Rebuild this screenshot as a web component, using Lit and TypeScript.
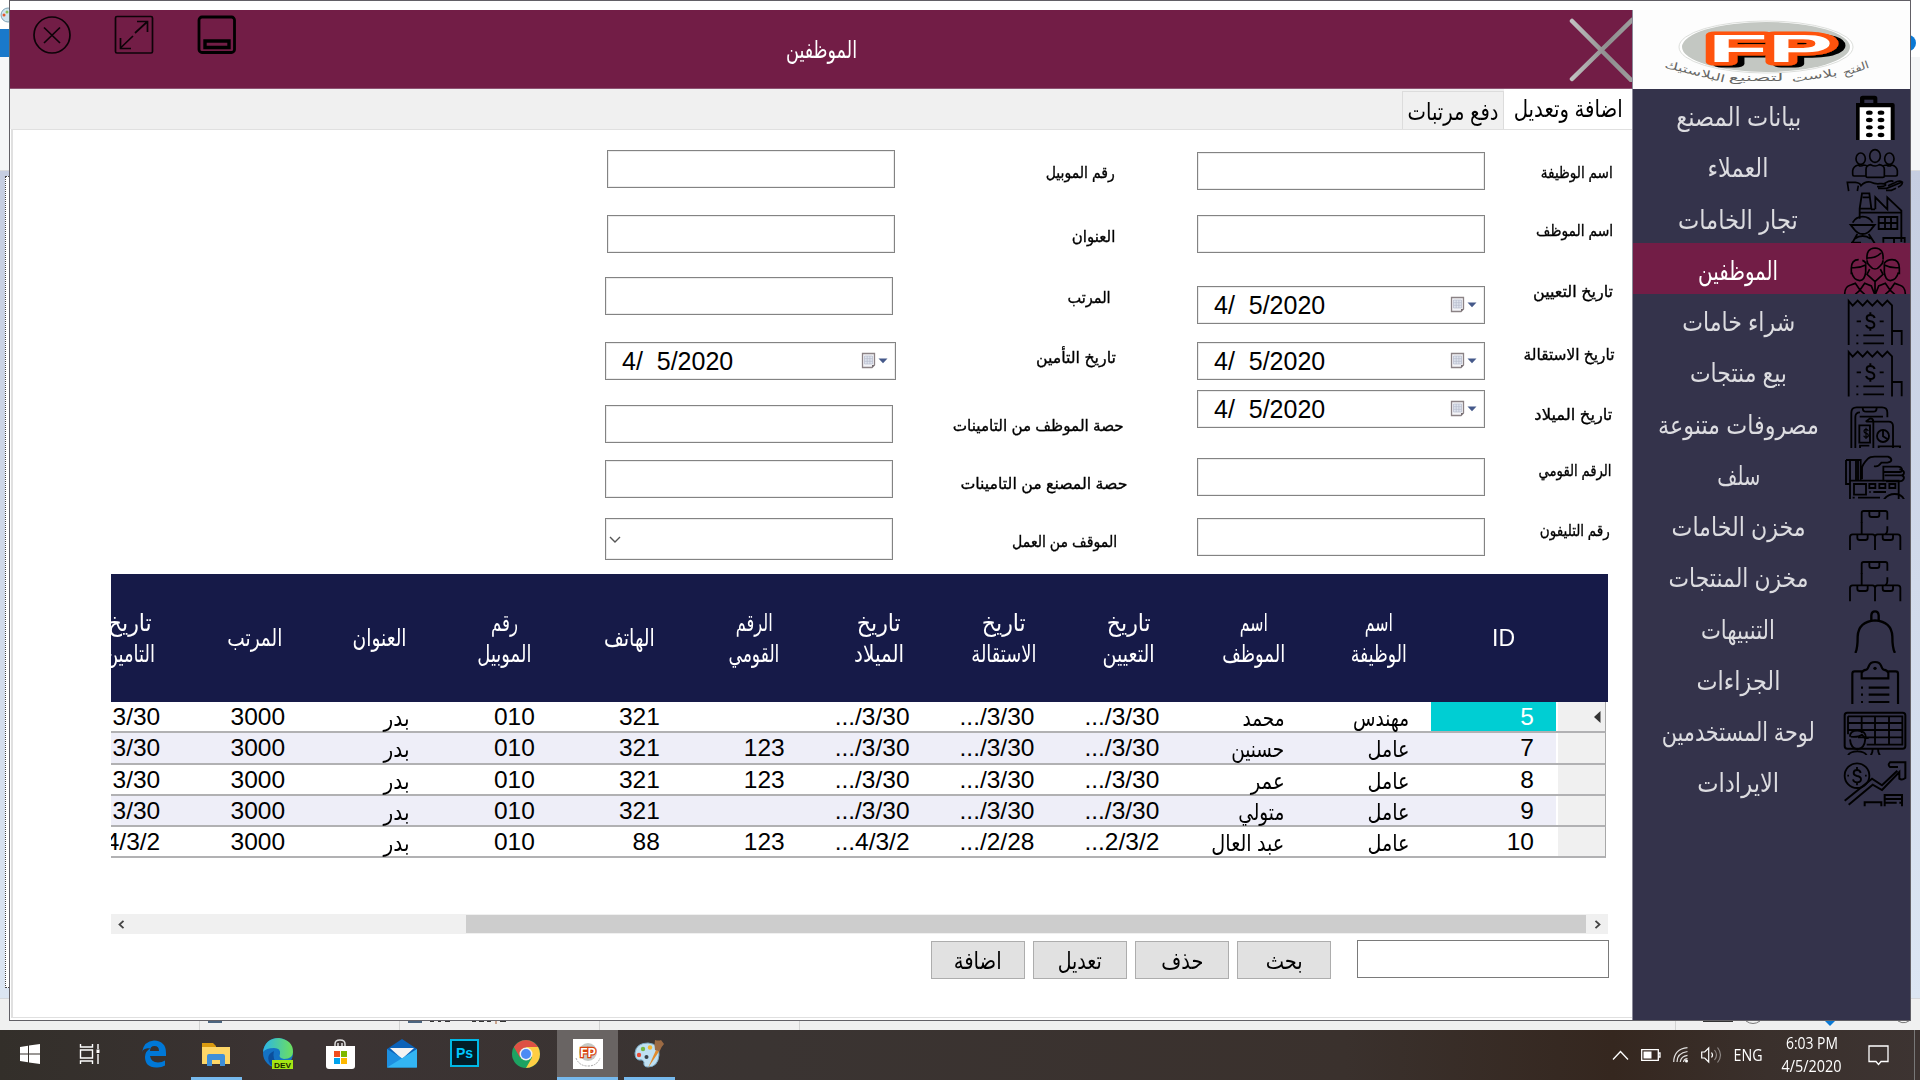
import { LitElement, html, svg, css, nothing } from "lit";
import { customElement, property } from "lit/decorators.js";
import { classMap } from "lit/directives/class-map.js";
import { styleMap } from "lit/directives/style-map.js";

/** Text squeezed or stretched horizontally to a given advance width. */
@customElement("fit-text")
class FitText extends LitElement {
  @property({ type: Number }) w = 0;
  @property() text = "";
  static styles = css`
    :host { display: block; direction: rtl; white-space: pre; flex: none; }
    .t { display: inline-block; transform-origin: 100% 50%; }
    .ltr { direction: ltr; }
  `;
  updated() {
    const t = this.renderRoot.querySelector(".t") as HTMLElement;
    this.style.width = this.w + "px";
    t.style.transform = "";
    const n = t.getBoundingClientRect().width;
    if (n > 0) t.style.transform = `scaleX(${this.w / n})`;
  }
  render() {
    return html`<span class=${classMap({ t: true, ltr: /^[\x20-\x7e]+$/.test(this.text) })}>${this.text}</span>`;
  }
}

interface Label { text: string; w: number; gap: number; inset: number; }
interface Control { gap: number; kind: "text" | "date" | "combo"; shift?: number; wide?: boolean; }

const RIGHT_LABELS: Label[] = [
  { text: "اسم الوظيفة", w: 72, gap: 31, inset: 3 },
  { text: "اسم الموظف", w: 77, gap: 34, inset: 3 },
  { text: "تاريخ التعيين", w: 80, gap: 37, inset: 3.5 },
  { text: "تاريخ الاستقالة", w: 91, gap: 38.5, inset: 1 },
  { text: "تاريخ الميلاد", w: 78, gap: 36.5, inset: 4 },
  { text: "الرقم القومي", w: 73, gap: 32.2, inset: 4.5 },
  { text: "رقم التليفون", w: 70, gap: 35.8, inset: 6 },
];
const LEFT_LABELS: Label[] = [
  { text: "رقم الموبيل", w: 69, gap: 31, inset: 13 },
  { text: "العنوان", w: 43.5, gap: 40, inset: 12.5 },
  { text: "المرتب", w: 43, gap: 37, inset: 17.5 },
  { text: "تاريخ التأمين", w: 80, gap: 36, inset: 12 },
  { text: "حصة الموظف من التامينات", w: 171, gap: 43.7, inset: 4 },
  { text: "حصة المصنع من التامينات", w: 167, gap: 34.8, inset: 1 },
  { text: "الموقف من العمل", w: 105, gap: 34, inset: 11 },
];
const RIGHT_CONTROLS: Control[] = [
  { kind: "text", gap: 22 }, { kind: "text", gap: 25 }, { kind: "date", gap: 33 },
  { kind: "date", gap: 18 }, { kind: "date", gap: 10 }, { kind: "text", gap: 30 },
  { kind: "text", gap: 22 },
];
const LEFT_CONTROLS: Control[] = [
  { kind: "text", gap: 20, shift: 2 }, { kind: "text", gap: 27, shift: 2 }, { kind: "text", gap: 24 },
  { kind: "date", gap: 27, wide: true }, { kind: "text", gap: 25 }, { kind: "text", gap: 17 },
  { kind: "combo", gap: 20 },
];

const HEADERS: [string, number][][] = [
  [["ID", 23]],
  [["اسم", 28], ["الوظيفة", 56]],
  [["اسم", 28], ["الموظف", 63]],
  [["تاريخ", 44], ["التعيين", 52]],
  [["تاريخ", 44], ["الاستقالة", 65]],
  [["تاريخ", 44], ["الميلاد", 50]],
  [["الرقم", 37], ["القومي", 51]],
  [["الهاتف", 51]],
  [["رقم", 27], ["الموبيل", 54]],
  [["العنوان", 54]],
  [["المرتب", 55]],
  [["تاريخ", 44], ["التامين", 50]],
];
const NAME_W: Record<string, number> = {
  "مهندس": 56, "عامل": 42, "محمد": 42, "حسنين": 53, "عمر": 34, "متولي": 46, "عبد العال": 73, "بدر": 26,
};
const ROWS: string[][] = [
  ["5", "مهندس", "محمد", ".../3/30", ".../3/30", ".../3/30", "", "321", "010", "بدر", "3000", "3/30"],
  ["7", "عامل", "حسنين", ".../3/30", ".../3/30", ".../3/30", "123", "321", "010", "بدر", "3000", "3/30"],
  ["8", "عامل", "عمر", ".../3/30", ".../3/30", ".../3/30", "123", "321", "010", "بدر", "3000", "3/30"],
  ["9", "عامل", "متولي", ".../3/30", ".../3/30", ".../3/30", "", "321", "010", "بدر", "3000", "3/30"],
  ["10", "عامل", "عبد العال", "...2/3/2", ".../2/28", "...4/3/2", "123", "88", "010", "بدر", "3000", "4/3/2"],
];

const receipt = svg`
  <path d="M686 153.7V20l12 14 15-15 15 15 14-15 15 15 15-15 15 15 15-15 14 14V153.7M817 110h28v43" transform="translate(0 1)"/>
  <path d="M710 82h13M779 82h12M730 124h62M730 148h62M709 124h6M709 148h6"/>
  <path d="M764 72q-3-9-13-9-11 0-11 9 0 8 11 10 12 2 12 11 0 9-12 9-10 0-13-9M751 55v8M751 102v8" stroke-width="6"/>`;
const boxes = svg`
  <path d="M725 72V42q0-6 6-6h65q6 0 6 6v20M802 82v12q0 8-6 12M748 37v10q0 7 7 7h16q7 0 7-7V37"/>
  <path d="M725 70v35M690 154v-40q0-8 8-8h59q8 0 8 8v40M765 154v-40q0-8 8-8h60q8 0 8 8v40M712 107v9q0 7 7 7h17q7 0 7-7v-9M788 107v9q0 7 7 7h17q7 0 7-7v-9"/>`;

/** Menu glyphs, each drawn on a 200 x 154 canvas whose x origin is 666. */
const ICONS = [
  svg`<g stroke="none" fill="#000"><path d="M708 42h12V28q0-8 8-8h36q8 0 8 8v14h46q6 0 6 6v106H708z"/>
    <path d="M733 32h27v10h-27z" fill="#34334b"/><path d="M719 55h93v99h-93z" fill="#fff"/>
    ${[71, 93, 115, 138].map((y) => svg`<ellipse cx="748" cy=${y} rx="10" ry="6.5"/><ellipse cx="783" cy=${y} rx="10" ry="6.5"/>`)}</g>`,
  svg`<g stroke-width="5"><ellipse cx="722" cy="56" rx="14" ry="17"/><ellipse cx="765" cy="48" rx="16" ry="19"/><ellipse cx="808" cy="56" rx="14" ry="17"/>
    <path d="M737 108h-35q-4 0-4-5V92q2-14 17-17 7 6 16 0 8 0 12 5M793 108h34q5 0 5-5V92q-2-14-17-17-7 6-15 0-8 0-13 5M738 108q0 4 5 4h45q5 0 5-4V88q0-12-15-14-12 8-26 0-14 2-14 14z"/>
    <path d="M686 153l-4-26h24q14 1 17 10 12-14 28-11 16 7 28 5 18-1 18 4-2 4-26 5M712 153l3-16M774 145h26l46-19q-8-6-22 2l-20 9M792 131l14-7q10-3 14 1M828 145l-14 6h-16M846 127q4 6-12 15"/></g>`,
  svg`<path d="M719 62V50l7-46h22l6 46M719 50h35M728 16h20M766 52V16l36 36V16l42 40v94M719 62h124M719 54v26M765 52h-12M776 75h56v36h-56zM795 75v36M813 75v36M776 93h56"/>
    <path d="M692 99h72l-9 11q-12 16-27 16t-27-16zM698 92q10-18 30-18t30 18M712 126l-16 28M746 126l18 28M704 140q24-16 48 0M693 152h30M790 152v-14h64v14M822 138v16"/>`,
  svg`<g stroke-width="5"><path d="M741 50q-3-34 24-35 27 1 24 35M741 52q0 10 8 16 16 20 32 0 8-6 8-16M743 45q25 0 40-15"/>
    <path d="M716 50q-22 0-22 26v18M739 62q-6-9-12-10M694 74q24 2 43-8v22q-3 24-18 25-19-3-24-25M816 50q22 0 22 26v18M792 62q8-12 24-12M836 74q-24 2-43-8v22q3 24 18 25 19-3 24-25"/>
    <path d="M674 154q0-24 18-28l14-5 14 20 14-20 20 8 10 25M856 154q0-24-18-28l-14-5-14 20-14-20-20 8-10 25M749 78l-8 16 24 22 24-22-8-16M765 116v38M720 141l-14 13M720 141l14 13M810 141l-14 13M810 141l14 13"/></g>`,
  receipt,
  receipt,
  svg`<path d="M694 154V47q0-16 16-16h76q16 0 16 16v14M706 154V60q0-14 14-14M728 32q0 12 10 12h22q10 0 10-12M719 59h70"/>
    <path d="M718 85h32v52h-32zM760 154V74q0-10-10-10l-13 10M740 74h66q13 0 13 14v66M776 154v-6h64v6M720 154v-8h28"/>
    <circle cx="789" cy="117" r="18"/><path d="M789 99v19l14 9"/><path d="M745 102q-2-5-7-5-6 0-6 6 0 5 6 6 7 1 7 6 0 6-7 6-5 0-7-5M738 92v34" stroke-width="3.5"/>`,
  svg`<path d="M726 94V62q0-12 18-30 6-6 20-6h40q10 4 10 10t-12 8h-18q-10 14-22 10M790 100V56h44q10 0 12 8t-8 8h-46M838 64q14 2 14 10t-12 8h-46M846 82q8 4 5 11t-13 7h-40M678 36h44v62M678 36v72h12M690 36v62M708 36v62M714 36v62"/>
    <path d="M690 154V98h146v56M702 108h36v32h-36zM748 108h18v12h-18zM778 108h18v12h-18zM808 108h18v12h-18zM748 132h4M760 132h38M698 149h6M714 149h66M792 154q12-16 32-16t28 16"/>`,
  boxes,
  boxes,
  svg`<g stroke-width="7"><path d="M706 153q7-12 7-50 2-44 52-48 50 4 52 48 0 38 8 50"/><path d="M754 55V40q1-12 11-12t11 12v15"/></g>`,
  svg`<g stroke-width="6.5"><path d="M697 154V62q0-7 7-7h22M834 154V62q0-7-7-7h-22M725 76V60q2-8 14-10 4-1 8-12 4-11 18-11t18 11q4 11 8 12 12 2 14 10v16z"/>
    <path d="M746 104h62M746 125h62M746 147h62M723 104h6M723 125h6M723 147h6"/></g><circle cx="765" cy="46" r="5" fill="#000" stroke="none"/>`,
  svg`<rect x="674" y="26" width="182" height="108" rx="8" stroke-width="6"/><path d="M684 37h163v85H740M684 37v54M684 57h163M684 78h163M714 100h133M725 37v50M765 37v85M807 37v85"/>
    <path d="M690 98q0-18 22-18 26 0 26 22h8M692 98q24 2 34-6l10 12q-2 30-24 32-20-4-22-30M684 154q6-12 28-12t28 12M758 134q0 14-6 20M774 134q0 14 6 20"/>`,
  svg`<circle cx="711" cy="62" r="37"/><path d="M722 54q-2-9-11-9-10 0-10 9 0 7 10 9 12 2 12 10 0 9-12 9-10 0-12-9M711 36v9M711 82v9M682 62h5M735 62h5" stroke-width="5.500"/>
    <path d="M674 137l82-66 30 20 46-44M686 149l72-60 28 16 52-54v20q8 6 18-2V22h-46q-8 8 0 14h24M734 154v-12h50v12M794 154v-34h52v34M794 132h52M794 143h36M838 143h8" stroke-width="6"/>`,
];

const MENU: { text: string; w: number }[] = [
  { text: "بيانات المصنع", w: 125 },
  { text: "العملاء", w: 61 },
  { text: "تجار الخامات", w: 120 },
  { text: "الموظفين", w: 80 },
  { text: "شراء خامات", w: 113 },
  { text: "بيع منتجات", w: 97 },
  { text: "مصروفات متنوعة", w: 161 },
  { text: "سلف", w: 43 },
  { text: "مخزن الخامات", w: 134 },
  { text: "مخزن المنتجات", w: 140 },
  { text: "التنبيهات", w: 74 },
  { text: "الجزاءات", w: 84 },
  { text: "لوحة المستخدمين", w: 153 },
  { text: "الايرادات", w: 82 },
];

const px = (n: number) => `${n}px`;

@customElement("app-root")
class AppRoot extends LitElement {
  static styles = css`
    :host { display: block; width: 1920px; height: 1080px; overflow: hidden; font-family: "Liberation Sans", "DejaVu Sans", sans-serif; color: #000; }
    * { box-sizing: border-box; }
    svg { display: block; flex: none; }
    .screen { display: flex; flex-direction: column; width: 1920px; height: 1080px; background: #f0f0f0; }
    .desk { display: flex; height: 1021px; }
    .gutter { width: 9px; display: flex; flex-direction: column; overflow: hidden; }
    .g-top { height: 29px; background: #fff; }
    .g-tab { height: 28px; background: #1979ca; }
    .g-tab.plain { background: #fff; }
    .g-ribbon { height: 114px; background: #f5f6f7; border-bottom: 1px solid #dadbdc; }
    .g-canvas { height: 827px; background: linear-gradient(#c6cee1, #dce6f3); padding: 5px 0 0 5px; }
    .g-page { height: 812px; background: #fff; border: 1px dotted #444; border-right: 0; }
    .g-status { flex: 1; border-top: 1px solid #d5d8dc; }
    .window { width: 1902px; display: flex; border: 1px solid #626066; background: #fff; padding-top: 9px; }
    .main { width: 1622px; display: flex; flex-direction: column; }
    .title { height: 79px; background: #721d46; border-bottom: 1px solid #8d5473; display: flex; align-items: flex-start; }
    .win-btns { display: flex; gap: 42.500px; padding: 5px 0 0 21.500px; width: 776px; }
    .title fit-text { color: #fff; font-size: 24px; line-height: 40px; margin-top: 20px; }
    .title .cross { margin: 6px 0 0 auto; }
    .tabs { height: 40px; background: #f0f0f0; display: flex; justify-content: flex-end; align-items: flex-end; }
    .tab { height: 38px; border: 1px solid #dcdcdc; border-bottom: 0; width: 102px; font-size: 24px; line-height: 34px; padding: 3px 4px 0 0; display: flex; justify-content: flex-end; }
    .tab.active { height: 41px; width: 128px; background: #fff; border: 0; margin-bottom: -1px; padding: 3px 9px 0 0; }
    .panel { flex: 1; margin: 0 0 2px 1px; border: solid #e0e0e0; border-width: 1px 0 1px 2px; background: #fff; display: flex; flex-direction: column; }
    .form { height: 444px; display: flex; padding-left: 592px; }
    .labels, .controls { display: flex; flex-direction: column; }
    .labels { align-items: flex-end; font-size: 16px; line-height: 24px; -webkit-text-stroke: .35px #000; }
    .labels.l { width: 232px; }
    .labels.r { width: 131px; }
    .controls.l { width: 291px; }
    .controls.r { width: 288px; margin-left: 69px; }
    .ctl { height: 38px; width: 288px; border: 1px solid #838383; box-shadow: inset 0 0 0 1px #ececec; background: #fff; display: flex; align-items: center; flex: none; }
    .ctl.wide { width: 291px; }
    .ctl.combo { height: 42px; padding: 2px 0 0 3px; }
    .ctl.date { font-size: 25px; padding: 0 7px 0 16px; justify-content: space-between; white-space: pre; }
    .grid { margin-left: 98px; width: 1497px; height: 340px; display: flex; flex-direction: column; overflow: hidden; direction: rtl; }
    .head { height: 128px; background: #161a48; display: flex; padding-right: 42px; color: #fff; font-size: 24px; line-height: 31.500px; flex: none; }
    .th { width: 124.900px; display: flex; flex-direction: column; align-items: center; justify-content: center; flex: none; }
    .row { height: 31.250px; display: flex; border-bottom: 2px solid #b1b1b3; font-size: 24.500px; line-height: 30.500px; flex: none; margin-right: 2px; border-right: 1px solid #a8a8a8; }
    .row:nth-child(odd) { background: #eeeef8; }
    .rh { width: 49px; background: #f0f0f0; border-left: 2px solid #fff; flex: none; padding: 9px 4px 0 0; }
    .td { width: 124.900px; padding-right: 22px; flex: none; white-space: nowrap; }
    .td bdo { direction: ltr; unicode-bidi: bidi-override; }
    .td.sel { background: #00ced3; color: #fff; }
    .td fit-text { font-size: 23px; padding-top: 1px; }
    .hscroll { margin-left: 98px; width: 1497px; height: 20px; background: #f0f0f0; display: flex; align-items: center; justify-content: space-between; padding: 0 7px; }
    .thumb { width: 1120px; height: 18px; background: #cdcdcd; margin-left: auto; margin-right: 8px; }
    .actions { display: flex; margin: 6px 23px 0 0; justify-content: flex-end; gap: 8px; }
    .btn { width: 94px; height: 38px; margin-top: 1px; background: #e1e1e1; border: 1px solid #adadad; display: flex; justify-content: center; font-size: 24px; line-height: 38px; }
    .search { width: 252px; height: 38px; border: 1px solid #7a7a7a; margin-left: 18px; }
    .side { width: 278px; background: #34334b; display: flex; flex-direction: column; border-left: 1px solid #8b8a99; }
    .logo { height: 79px; background: #fdfdfd; flex: none; }
    .item { height: 51.250px; display: flex; align-items: center; justify-content: flex-end; color: #dcdce0; font-size: 26px; line-height: 44px; flex: none; }
    .item.active { background: #721d46; color: #fff; }
    .item .cap { width: 208px; display: flex; justify-content: center; padding-top: 5px; }
    .item svg { fill: none; stroke: #000; stroke-width: 5.500; margin-right: 1px; }
    .strip { height: 9px; background: #f0f0f0; display: flex; overflow: hidden; }
    .bar { height: 50px; display: flex; background: linear-gradient(90deg, #332f2a, #3b3333 15%, #3a3432 40%, #3a312d 70%, #35271f 84%, #3a302c 92%, #3d3432); color: #fff; font-family: "Open Sans", "Noto Sans", sans-serif; }
    .app { width: 62px; display: flex; align-items: center; justify-content: center; border-bottom: 3px solid transparent; flex: none; }
    .app.first { width: 60px; }
    .app.views { width: 63px; padding-right: 3px; }
    .app.open { width: 51px; border-color: #76b9ed; margin: 0 5.500px; }
    .app.cur { background: #696463; border-color: #76b9ed; }
    .apps { display: flex; width: 1612px; }
    .apps .cur { width: 61px; }
    .tray { display: flex; align-items: center; flex: 1; font-size: 15.500px; }
    .tray svg { margin-right: 12px; }
    .clock { display: flex; flex-direction: column; align-items: center; width: 62px; margin: 0 25px 0 17.500px; line-height: 23px; }
    .peek { margin-left: auto; width: 6px; height: 50px; border-left: 1px solid #777; }
  `;

  private gutter(left: boolean) {
    return html`<div class="gutter">
      <div class="g-top">${left ? html`<svg width="9" height="29" viewBox="0 0 9 29"><circle cx="8" cy="15" r="7" fill="#cfe3ee" stroke="#7fa3b5"/><circle cx="4" cy="15" r="1.500" fill="#e4572e"/><circle cx="7" cy="12" r="1.500" fill="#8cc152"/></svg>` : nothing}</div>
      <div class=${classMap({ "g-tab": true, plain: !left })}>${left ? nothing : html`<svg width="9" height="28"><circle cx="-3" cy="14" r="8" fill="#0a78d4"/></svg>`}</div>
      <div class="g-ribbon"></div>
      <div class="g-canvas">${left ? html`<div class="g-page"></div>` : nothing}</div>
      <div class="g-status"></div>
    </div>`;
  }

  private labels(list: Label[], side: string) {
    return html`<div class="labels ${side}">${list.map((l) => html`<fit-text .w=${l.w} .text=${l.text}
      style=${styleMap({ marginTop: px(l.gap), marginRight: px(l.inset) })}></fit-text>`)}</div>`;
  }

  private controls(list: Control[], side: string) {
    return html`<div class="controls ${side}">${list.map((c) => html`<div
      class=${classMap({ ctl: true, date: c.kind === "date", combo: c.kind === "combo", wide: !!c.wide })}
      style=${styleMap({ marginTop: px(c.gap), marginLeft: px(c.shift ?? 0) })}>
      ${c.kind === "date" ? html`<span>4/  5/2020</span>
        <svg width="27" height="18" viewBox="0 0 27 18"><path d="M1.500 1.500h12v11.500l-2.500 2.500H1.500z" fill="#f4f4f8" stroke="#8b8285" stroke-width="1.300"/><path d="M3.500 4h8v8h-8zM6.200 4v8M8.900 4v8M3.500 6.700h8M3.500 9.300h8" fill="#dfe4ee" stroke="#b6bccb" stroke-width=".7"/><path d="M11 15.500v-2.500h2.500z" fill="#736c70"/><path d="M17.500 6.500h9l-4.500 4.800z" fill="#45598a"/></svg>` : nothing}
      ${c.kind === "combo" ? html`<svg width="12" height="8" viewBox="0 0 12 8"><path d="M1 1l5 5 5-5" fill="none" stroke="#555" stroke-width="1.400"/></svg>` : nothing}
    </div>`)}</div>`;
  }

  private cell(v: string, i: number, r: number) {
    return html`<div class=${classMap({ td: true, sel: i === 0 && r === 0 })}>${NAME_W[v]
      ? html`<fit-text .w=${NAME_W[v]} .text=${v}></fit-text>` : html`<bdo dir="ltr">${v}</bdo>`}</div>`;
  }

  private logo() {
    return html`<svg class="logo" width="277" height="79" viewBox="1633 10 277 79">
      <defs><filter id="sh" x="-20%" y="-20%" width="150%" height="150%"><feDropShadow dx="7" dy="2" stdDeviation="0" flood-color="#000"/></filter></defs>
      <ellipse cx="1766" cy="47" rx="87" ry="26" fill="#fff" stroke="#d3d5d2" stroke-width=".8"/>
      <ellipse cx="1766" cy="47" rx="84" ry="25" fill="#c3c7c2"/>
      <g font-family="Liberation Sans" font-weight="700" font-size="39" stroke-linejoin="round" filter="url(#sh)">
        <text x="1708" y="61.500" textLength="125" lengthAdjust="spacingAndGlyphs" fill="#fff" stroke="#ff5308" stroke-width="7" paint-order="stroke">FP</text>
      </g>
      <g font-family="DejaVu Sans" font-size="10.500" fill="#666664" direction="rtl" text-anchor="middle">
        <text transform="translate(1857 72) rotate(-19)" textLength="27" lengthAdjust="spacingAndGlyphs">الفتح</text>
        <text transform="translate(1815 79) rotate(-8)" textLength="46" lengthAdjust="spacingAndGlyphs">بلاست</text>
        <text transform="translate(1756 81)" textLength="55" lengthAdjust="spacingAndGlyphs">لتصنيع</text>
        <text transform="translate(1694 75) rotate(14)" textLength="62" lengthAdjust="spacingAndGlyphs">البلاستيك</text>
      </g>
    </svg>`;
  }

  private taskbar() {
    return html`<div class="bar">
      <div class="apps">
        <div class="app first"><svg width="20" height="20" viewBox="0 0 20 20" fill="#fff"><path d="M0 3l8-1.200v7.700H0zM9 1.600L20 0v9.500H9zM0 10.500h8v7.700L0 17zM9 10.500h11V20L9 18.400z"/></svg></div>
        <div class="app views"><svg width="22" height="20" viewBox="0 0 22 20" fill="none" stroke="#fff" stroke-width="1.400"><path d="M1.500 0v3h12V0M1.500 20v-3h12v3M1.500 6h12v8h-12zM19 0v5M19 10v10"/><path d="M17.500 5.500h3v3.500h-3z" fill="#fff" stroke="none"/></svg></div>
        <div class="app"><svg width="26" height="28" viewBox="0 0 26 28"><path d="M1 12Q3 1 13 .5 25 1 25 13v3H9q1 6 8 6.500 4 0 7-2v5q-4 2.500-9 2Q4 27 4 17q0-6 6-9-8 0-9 4zm8-1h9q0-5-4.500-5T9 11z" fill="#0078d7"/></svg></div>
        <div class="app open"><svg width="28" height="24" viewBox="0 0 28 24"><path d="M0 1h11l3 3v5H0z" fill="#d99a10"/><path d="M0 5h28v17H0z" fill="#fdd667"/><path d="M5 24V14q0-2 2-2h14q2 0 2 2v10h-5v-6h-8v6z" fill="#3f8fd8"/></svg></div>
        <div class="app"><svg width="30" height="31" viewBox="0 0 30 31"><defs><linearGradient id="e" x2="1"><stop stop-color="#2bb5e8"/><stop offset="1" stop-color="#6ee05c"/></linearGradient></defs><circle cx="15" cy="15" r="15" fill="#1472c4"/><path d="M0 14Q2 0 16 0q14 2 14 14 0 7-9 7-6-1-4-5 1-6-6-6-8 0-11 4z" fill="url(#e)"/><path d="M11 13q-3 12 10 15-8 4-14-2-5-9 4-13z" fill="#0c4f9c"/><path d="M9 22h21v9H9z" fill="#a3e514"/><text x="19.500" y="29.500" text-anchor="middle" font-family="Liberation Sans" font-weight="700" font-size="8" textLength="17" lengthAdjust="spacingAndGlyphs" fill="#182600">DEV</text></svg></div>
        <div class="app"><svg width="29" height="30" viewBox="0 0 29 30"><path d="M9 9V5q0-4 5-4t5 4v4M12 9V4M16 9V4" fill="none" stroke="#ddd" stroke-width="1.500"/><path d="M0 7h29v20q0 3-3 3H3q-3 0-3-3z" fill="#fff"/><path d="M8 12h6v6H8z" fill="#f04e1f"/><path d="M15 12h6v6h-6z" fill="#7eb900"/><path d="M8 19h6v6H8z" fill="#00a3ee"/><path d="M15 19h6v6h-6z" fill="#feb800"/></svg></div>
        <div class="app"><svg width="30" height="29" viewBox="0 0 30 29"><path d="M0 10L15 0l15 10v18H0z" fill="#0b62b8"/><path d="M3 9h24L15 20z" fill="#f3f3f3"/><path d="M0 10l30 18.500H0z" fill="#1d8fe0"/><path d="M30 10v18.500H0z" fill="#33b5f3"/></svg></div>
        <div class="app"><svg width="29" height="29" viewBox="0 0 29 29"><path d="M1 1h27v26H1z" fill="#011d28" stroke="#00b8e6" stroke-width="2"/><text x="14.500" y="19" text-anchor="middle" font-family="Liberation Sans" font-weight="700" font-size="14" fill="#00c8ff">Ps</text></svg></div>
        <div class="app"><svg width="28" height="28" viewBox="0 0 28 28"><circle cx="14" cy="14" r="14" fill="#1da362"/><path d="M1.900 7A14 14 0 0 1 26.100 7H14l-6 10.500z" fill="#dd5144"/><path d="M26.100 7A14 14 0 0 1 14 28l6-10.500L14 7z" fill="#ffce44"/><circle cx="14" cy="14" r="6.500" fill="#f1f1f1"/><circle cx="14" cy="14" r="5" fill="#4c8bf5"/></svg></div>
        <div class="app cur"><svg width="30" height="30" viewBox="0 0 30 30"><path d="M0 0h30v30H0z" fill="#fff"/><circle cx="15" cy="13" r="9" fill="#c5c9c5"/><path d="M3 19q3 8 12 8t12-8" fill="none" stroke="#aaa" stroke-dasharray="2 1"/><text x="15" y="18" text-anchor="middle" font-family="Liberation Sans" font-weight="700" font-size="12" fill="#fff" stroke="#d9430c" stroke-width="2.500" paint-order="stroke">FP</text></svg></div>
        <div class="app open"><svg width="30" height="29" viewBox="0 0 30 29"><path d="M1 14Q2 4 14 4q12 1 11 12-1 12-11 12-5 0-4-5-1-3-5-2-4-1-4-7z" fill="#bfe0f2" stroke="#7ba9c4"/><circle cx="5" cy="16" r="2.200" fill="#e94b35"/><circle cx="9" cy="10" r="2.200" fill="#77b843"/><circle cx="16" cy="8.500" r="2.200" fill="#f2b632"/><circle cx="12.500" cy="18" r="2" fill="#39424a"/><path d="M14 29l8-18 3 1.500z" fill="#e08a2c"/><path d="M21 11q-1-5 0-10 4 1 6 0l3 4q-3 3-4.500 7.500z" fill="#9c6a43"/></svg></div>
      </div>
      <div class="tray">
        <svg width="17" height="11" viewBox="0 0 17 11" fill="none" stroke="#fff" stroke-width="1.300"><path d="M1 9.500L8.500 1.500 16 9.500"/></svg>
        <svg width="20" height="12" viewBox="0 0 20 12"><path d="M.7.7h16.600v10.600H.7zM17.500 4h1.500v4h-1.500" fill="none" stroke="#fff" stroke-width="1.300"/><path d="M2.500 2.500h8v7h-8z" fill="#fff"/></svg>
        <svg width="16" height="16" viewBox="0 0 16 16" fill="none" stroke="#fff" stroke-width="1.200"><path d="M.7 15Q1 2 14.500.7M4 15Q4 6 14.500 4.500M7.200 15Q8 9 14.500 8.300M10.500 15q.5-3 4-3.300" stroke-opacity=".85"/><circle cx="13.500" cy="14" r="1.500" fill="#fff" stroke="none"/></svg>
        <svg width="21" height="18" viewBox="0 0 21 18" fill="none" stroke="#fff" stroke-width="1.200"><path d="M.7 6h3l4-4v14l-4-4h-3z"/><path d="M10.500 6.500q2 2.500 0 5"/><path d="M13.500 4q4 5 0 10M16.500 1.500q6 7.500 0 15" stroke="#8d8784"/></svg>
        <fit-text .w=${29} .text=${"ENG"}></fit-text>
        <div class="clock"><fit-text .w=${52} .text=${"6:03 PM"}></fit-text><fit-text .w=${60} .text=${"4/5/2020"}></fit-text></div>
        <svg width="21" height="21" viewBox="0 0 21 21" fill="none" stroke="#fff" stroke-width="1.300"><path d="M1 1h19v15.500h-7l-2.500 3-2.500-3H1z"/></svg>
        <div class="peek"></div>
      </div>
    </div>`;
  }

  render() {
    return html`<div class="screen">
      <div class="desk">
        ${this.gutter(true)}
        <div class="window">
          <div class="main">
            <div class="title">
              <div class="win-btns">
                <svg width="40" height="40" viewBox="0 0 40 40" fill="none" stroke="#0d0308" stroke-width="1.700"><circle cx="20" cy="20" r="18"/><path d="M12 12.500l16 15.500M28 12.500L12 28"/></svg>
                <svg width="40" height="40" viewBox="0 0 40 40" fill="none" stroke="#0d0308" stroke-width="1.700"><rect x="1.500" y="1.500" width="37" height="36.500" rx="1.500"/><path d="M21 18L33.500 6.500M23 6.500h10.500V17M19 21L6.500 33M6.500 23v10.500H17"/></svg>
                <svg width="40" height="40" viewBox="0 0 40 40" fill="none" stroke="#000" stroke-width="2.800"><rect x="2" y="2" width="35.500" height="35.500" rx="3"/><path d="M8 26h24v6.500H8z" stroke-width="3.400"/></svg>
              </div>
              <fit-text .w=${71} .text=${"الموظفين"}></fit-text>
              <svg class="cross" width="63" height="66" viewBox="0 0 63 66"><defs><linearGradient id="g" gradientUnits="userSpaceOnUse" x1="0" x2="63"><stop stop-color="#c4c4c4"/><stop offset=".6" stop-color="#8f8f8f"/><stop offset="1" stop-color="#9d9d9d"/></linearGradient></defs><path d="M3 5l60 60M3 63L63 4" stroke="url(#g)" stroke-width="4.500" stroke-linecap="round"/></svg>
            </div>
            <div class="tabs">
              <div class="tab"><fit-text .w=${91} .text=${"دفع مرتبات"}></fit-text></div>
              <div class="tab active"><fit-text .w=${109} .text=${"اضافة وتعديل"}></fit-text></div>
            </div>
            <div class="panel">
              <div class="form">
                ${this.controls(LEFT_CONTROLS, "l")}${this.labels(LEFT_LABELS, "l")}
                ${this.controls(RIGHT_CONTROLS, "r")}${this.labels(RIGHT_LABELS, "r")}
              </div>
              <div class="grid">
                <div class="head">${HEADERS.map((h) => html`<div class="th">${h.map(([t, w]) => html`<fit-text .w=${w} .text=${t}></fit-text>`)}</div>`)}</div>
                ${ROWS.map((r, n) => html`<div class="row"><div class="rh">${n === 0 ? html`<svg width="7" height="12"><path d="M6.500 0v12L0 6z" fill="#333"/></svg>` : nothing}</div>${r.map((v, i) => this.cell(v, i, n))}</div>`)}
              </div>
              <div class="hscroll">
                <svg width="7" height="9" viewBox="0 0 7 9" fill="none" stroke="#444" stroke-width="1.800"><path d="M5.500.8L1.500 4.500l4 3.700"/></svg>
                <div class="thumb"></div>
                <svg width="7" height="9" viewBox="0 0 7 9" fill="none" stroke="#444" stroke-width="1.800"><path d="M1.500.8l4 3.700-4 3.700"/></svg>
              </div>
              <div class="actions">
                <div class="btn"><fit-text .w=${48} .text=${"اضافة"}></fit-text></div>
                <div class="btn"><fit-text .w=${44} .text=${"تعديل"}></fit-text></div>
                <div class="btn"><fit-text .w=${42} .text=${"حذف"}></fit-text></div>
                <div class="btn"><fit-text .w=${37} .text=${"بحث"}></fit-text></div>
                <div class="search"></div>
              </div>
            </div>
          </div>
          <div class="side">
            ${this.logo()}
            ${MENU.map((m, i) => html`<div class=${classMap({ item: true, active: i === 3 })}>
              <div class="cap"><fit-text .w=${m.w} .text=${m.text}></fit-text></div>
              <svg width="66.700" height="51.250" viewBox="666 0 200 153.700">${ICONS[i]}</svg>
            </div>`)}
          </div>
        </div>
        ${this.gutter(false)}
      </div>
      <div class="strip"><svg width="1920" height="9" viewBox="0 0 1920 9"><path d="M199.500 0v9M399.500 0v9M599.500 0v9M799.500 0v9M1675.500 0v9" stroke="#d2d2d2"/><path d="M208 1h14M408 1h14" stroke="#4b6580" stroke-width="2"/><path d="M430 0h4M438 0h3M445 0h5M472 0h4M479 0h5M487 0h4M500 0h6M1703 0h30" stroke="#333" stroke-width="2"/><path d="M496 0v3" stroke="#a65a2c"/><path d="M1746 0q7 5 14 0M1898 0q8 5 15-4" fill="none" stroke="#777"/><path d="M1825 0h10l-5 5z" fill="#0a78d4"/></svg></div>
      ${this.taskbar()}
    </div>`;
  }
}
